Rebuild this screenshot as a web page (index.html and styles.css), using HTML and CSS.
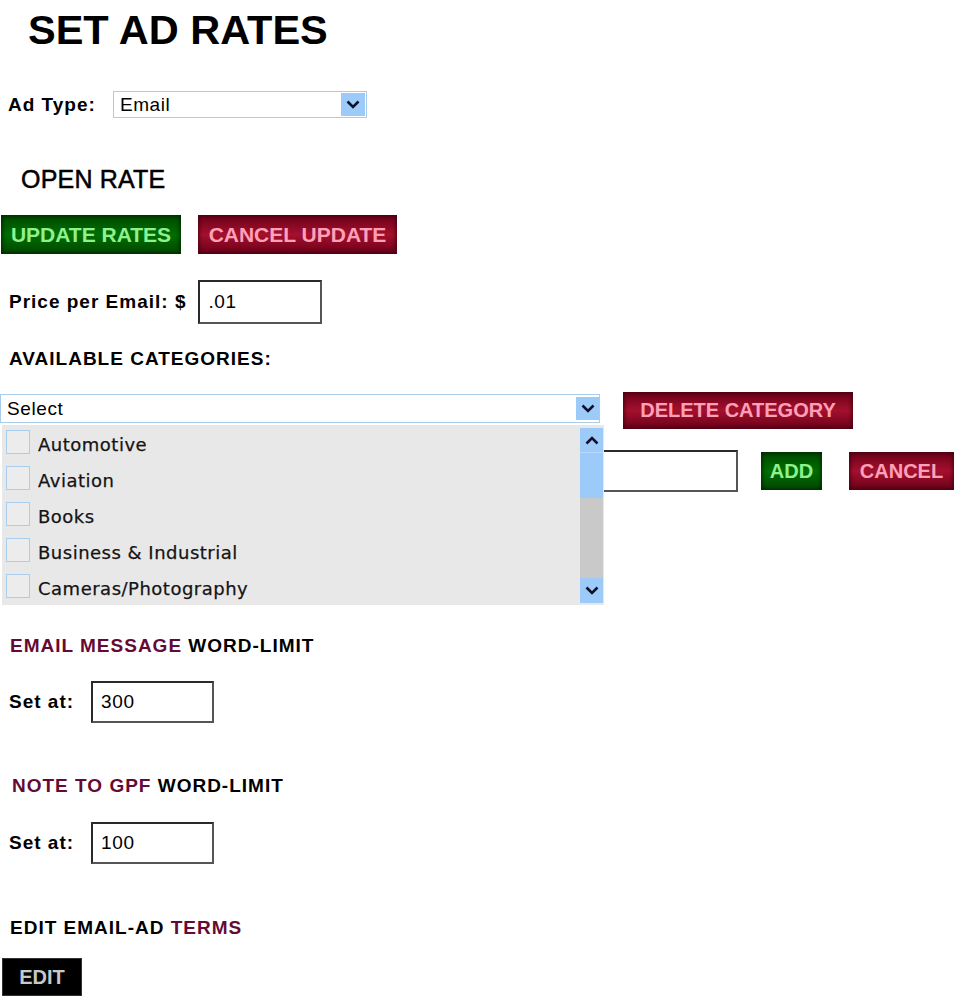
FILE: index.html
```html
<!DOCTYPE html>
<html>
<head>
<meta charset="utf-8">
<title>Set Ad Rates</title>
<link rel="stylesheet" href="styles.css">
</head>
<body>
<h1 class="title">SET AD RATES</h1>

<div class="row adtype">
  <span class="label">Ad Type:</span>
  <div class="select select-type">
    <span class="select-text">Email</span>
    <span class="arrow"><svg width="14" height="9" viewBox="0 0 14 9"><path d="M1.5 1.5l5.5 5.5 5.5-5.5" fill="none" stroke="#10102a" stroke-width="2.6"/></svg></span>
  </div>
</div>

<h2 class="open-rate">OPEN RATE</h2>

<div class="row btn-row">
  <button class="btn green big update">UPDATE RATES</button>
  <button class="btn red big cancel-update">CANCEL UPDATE</button>
</div>

<div class="row price">
  <span class="label">Price per Email: $</span>
  <input class="field price-field" type="text" value=".01">
</div>

<h3 class="heading cats">AVAILABLE CATEGORIES:</h3>

<div class="row cat-row">
  <div class="cat-wrap">
    <div class="select select-cat">
      <span class="select-text">Select</span>
      <span class="arrow"><svg width="14" height="9" viewBox="0 0 14 9"><path d="M1.5 1.5l5.5 5.5 5.5-5.5" fill="none" stroke="#10102a" stroke-width="2.6"/></svg></span>
    </div>
    <div class="dropdown">
      <ul class="items">
        <li class="item"><span class="check"></span><span class="item-text">Automotive</span></li>
        <li class="item"><span class="check"></span><span class="item-text">Aviation</span></li>
        <li class="item"><span class="check"></span><span class="item-text">Books</span></li>
        <li class="item"><span class="check"></span><span class="item-text">Business &amp; Industrial</span></li>
        <li class="item"><span class="check"></span><span class="item-text">Cameras/Photography</span></li>
      </ul>
      <div class="scrollbar">
        <span class="sb-btn sb-up"><svg width="14" height="9" viewBox="0 0 14 9"><path d="M1.5 7.5l5.5-5.5 5.5 5.5" fill="none" stroke="#10102a" stroke-width="2.6"/></svg></span>
        <span class="sb-thumb"></span>
        <span class="sb-track"></span>
        <span class="sb-btn sb-down"><svg width="14" height="9" viewBox="0 0 14 9"><path d="M1.5 1.5l5.5 5.5 5.5-5.5" fill="none" stroke="#10102a" stroke-width="2.6"/></svg></span>
      </div>
    </div>
  </div>
  <button class="btn red delete">DELETE CATEGORY</button>
</div>

<div class="row add-row">
  <input class="field add-field" type="text" value="">
  <button class="btn green add">ADD</button>
  <button class="btn red cancel">CANCEL</button>
</div>

<h3 class="heading email-h"><span class="m">EMAIL MESSAGE</span> WORD-LIMIT</h3>
<div class="row setat">
  <span class="label">Set at:</span>
  <input class="field limit-field" type="text" value="300">
</div>

<h3 class="heading note-h"><span class="m">NOTE TO GPF</span> WORD-LIMIT</h3>
<div class="row setat setat2">
  <span class="label">Set at:</span>
  <input class="field limit-field" type="text" value="100">
</div>

<h3 class="heading terms-h">EDIT EMAIL-AD <span class="m">TERMS</span></h3>
<button class="btn edit">EDIT</button>
</body>
</html>
```

FILE: styles.css
```css
html, body {
  margin: 0;
  padding: 0;
  background: #fff;
}
body {
  font-family: "Liberation Sans", Arial, sans-serif;
  color: #000;
  overflow: hidden;
  width: 954px;
  height: 996px;
}

.title {
  margin: 6px 0 0 28px;
  font-size: 41.5px;
  line-height: 48px;
  font-weight: bold;
}

.row {
  display: flex;
  align-items: center;
}

.label {
  font-size: 19px;
  font-weight: bold;
  letter-spacing: 1px;
  line-height: 22px;
}

/* Ad type */
.adtype {
  margin-top: 37px;
  padding-left: 8px;
  gap: 17px;
}
.select {
  box-sizing: border-box;
  display: flex;
  align-items: center;
  justify-content: space-between;
  border: 1px solid #a9cde9;
  background: #fff;
}
.select-type {
  width: 254px;
  height: 27px;
  padding: 0 1px 0 6px;
}
.select-text {
  font-size: 19px;
  letter-spacing: 0.6px;
}
.arrow {
  width: 24px;
  height: 23px;
  background: #9ccbfa;
  display: flex;
  align-items: center;
  justify-content: center;
}

/* Open rate */
.open-rate {
  margin: 47px 0 0 21px;
  font-size: 25px;
  line-height: 28px;
  font-weight: normal;
  letter-spacing: 0.2px;
  -webkit-text-stroke: 0.5px #000;
}

/* Buttons */
.btn-row {
  margin-top: 22px;
  padding-left: 1px;
  gap: 17px;
}
.btn {
  border: none;
  padding: 0;
  margin: 0;
  font-family: "Liberation Sans", Arial, sans-serif;
  font-weight: bold;
  font-size: 20px;
  display: flex;
  align-items: center;
  justify-content: center;
}
.big {
  height: 39px;
  font-size: 21px;
}
.green {
  background: linear-gradient(#004800, #006e00 50%, #004800);
  color: #8ff08f;
  box-shadow: inset 0 0 4px 1px #002400;
}
.red {
  background: linear-gradient(#6a0018, #a4102d 50%, #6a0018);
  color: #ffa0b8;
  box-shadow: inset 0 0 4px 1px #45000f;
}
.update { width: 180px; }
.cancel-update { width: 199px; }

/* Price */
.price {
  margin-top: 26px;
  padding-left: 9px;
  gap: 12px;
}
.field {
  box-sizing: border-box;
  border: 2px solid #2a2a2a;
  border-right-color: #555;
  border-bottom-color: #555;
  height: 44px;
  margin: 0;
  padding: 0 0 0 8px;
  font-family: "Liberation Sans", Arial, sans-serif;
  font-size: 19px;
  letter-spacing: 0.6px;
  color: #000;
  background: #fff;
  outline: none;
}
.price-field { width: 124px; }

/* Headings */
.heading {
  margin: 24px 0 0 9px;
  font-size: 19px;
  line-height: 22px;
  font-weight: bold;
  letter-spacing: 1px;
}
.heading .m { color: #650a35; }

/* Categories */
.cat-row {
  margin-top: 22px;
  align-items: flex-start;
  gap: 23px;
}
.cat-wrap {
  position: relative;
  width: 600px;
  padding-top: 2px;
}
.select-cat {
  width: 600px;
  height: 29px;
  padding: 0 0 0 6px;
}
.select-cat .arrow {
  width: 23px;
  height: 23px;
}
.dropdown {
  position: absolute;
  top: 33px;
  left: 2px;
  width: 602px;
  height: 180px;
  background: #e8e8e8;
  z-index: 2;
  display: flex;
}
.items {
  list-style: none;
  margin: 0;
  padding: 0;
  flex: 1;
}
.item {
  height: 36px;
  display: flex;
  align-items: center;
  padding-left: 4px;
  gap: 8px;
}
.check {
  box-sizing: border-box;
  width: 24px;
  height: 24px;
  border: 1px solid #a8cdef;
  background: #ececec;
  margin-top: -2px;
}
.item-text {
  font-family: "DejaVu Sans", Verdana, sans-serif;
  font-size: 18px;
  letter-spacing: 0.5px;
  color: #141414;
  padding-top: 3px;
  -webkit-text-stroke: 0.25px #141414;
}
.scrollbar {
  width: 23px;
  margin: 3px 1px 2px 0;
  display: flex;
  flex-direction: column;
  background: #fff;
}
.sb-btn {
  display: flex;
  align-items: center;
  justify-content: center;
  background: #9ccbfa;
}
.sb-up { height: 24px; }
.sb-down { height: 25px; }
.sb-thumb {
  height: 45px;
  background: #9ccbfa;
  border-top: 1px solid #b8dafc;
}
.sb-track {
  flex: 1;
  background: #c9c9c9;
}
.delete {
  width: 230px;
  height: 37px;
}

/* Add row */
.add-row {
  margin-top: 21px;
}
.add-field {
  width: 736px;
  height: 42px;
  margin-left: 2px;
}
.add {
  width: 61px;
  height: 38px;
  margin-left: 23px;
}
.cancel {
  width: 105px;
  height: 38px;
  margin-left: 27px;
}

/* Word limits */
.email-h {
  margin: 143px 0 0 10px;
}
.setat {
  margin-top: 24px;
  padding-left: 9px;
  gap: 17px;
}
.limit-field {
  width: 123px;
  height: 42px;
}
.note-h {
  margin: 52px 0 0 12px;
}
.setat2 {
  margin-top: 25px;
}
.terms-h {
  margin: 53px 0 0 10px;
}
.edit {
  margin: 19px 0 0 2px;
  width: 80px;
  height: 38px;
  background: #000;
  color: #c8c8c8;
  border: 1px solid #333;
}
```
